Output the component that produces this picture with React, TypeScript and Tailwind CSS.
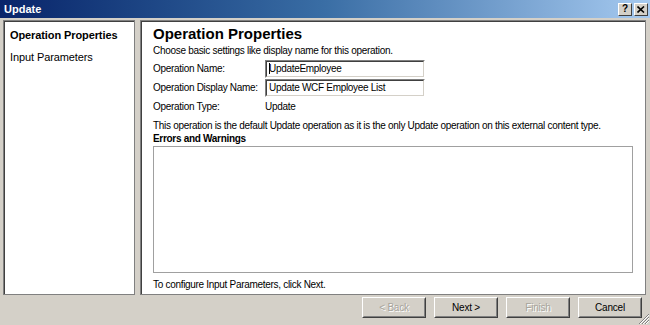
import React from "react";

const font = { fontFamily: '"Liberation Sans", Tahoma, sans-serif' };

function Btn({ label, disabled }: { label: string; disabled?: boolean }) {
  return (
    <div className="w-[64px] h-[21px] border border-t-white border-l-white border-b-[#404040] border-r-[#404040] bg-[#d4d0c8]">
      <div className="w-full h-full border border-t-[#d4d0c8] border-l-[#d4d0c8] border-b-[#808080] border-r-[#808080] flex items-center justify-center">
        <span
          className={disabled ? "text-[10px] tracking-[-0.2px] text-[#a7a49c] [text-shadow:1px_1px_0_#ffffff]" : "text-[10px] tracking-[-0.2px] text-black"}
        >
          {label}
        </span>
      </div>
    </div>
  );
}

function Field({ value, caret }: { value: string; caret?: boolean }) {
  return (
    <div className="w-[160px] h-[18px] border border-t-[#808080] border-l-[#808080] border-b-white border-r-white">
      <div className="w-full h-full bg-white border border-t-[#404040] border-l-[#404040] border-b-[#d4d0c8] border-r-[#d4d0c8] flex items-center pl-[2px] text-[10px] tracking-[-0.3px] text-black leading-none">
        {caret && <span className="inline-block w-px h-[11px] bg-black mr-[-1px]" />}
        {value}
      </div>
    </div>
  );
}

export default function App() {
  return (
    <div className="w-[650px] h-[325px] bg-[#d4d0c8] flex flex-col overflow-hidden relative" style={font}>
      <div className="h-[18px] bg-gradient-to-r from-[#0a246a] via-[#3a6ea5] to-[#a6caf0] flex items-center justify-between pl-[4px] pr-[2px] shrink-0">
        <span className="text-white font-bold text-[11px]">Update</span>
        <div className="flex gap-[2px]">
          <div className="w-[14px] h-[13px] bg-[#d4d0c8] border border-t-white border-l-white border-b-[#404040] border-r-[#404040] flex items-center justify-center text-[10px] font-bold leading-none text-black">?</div>
          <div className="w-[14px] h-[13px] bg-[#d4d0c8] border border-t-white border-l-white border-b-[#404040] border-r-[#404040] flex items-center justify-center">
            <svg width="8" height="7" viewBox="0 0 8 7">
              <path d="M0.5 0.5 L7 6.5 M7 0.5 L0.5 6.5" stroke="#000" strokeWidth="1.6" />
            </svg>
          </div>
        </div>
      </div>
      <div className="flex gap-[5px] pl-[3px] pr-[4px] pt-[2px] h-[277px] shrink-0">
        <div className="w-[132px] bg-white border border-[#808080] shadow-[inset_1px_1px_0_#404040] pl-[6px] pt-[6px] text-[11px] tracking-[-0.1px]">
          <div className="font-bold text-black h-[22px]">Operation Properties</div>
          <div className="text-black">Input Parameters</div>
        </div>
        <div className="flex-1 bg-white border border-[#808080] shadow-[inset_1px_1px_0_#404040] pl-[12px] pr-[12px] pt-[4px] pb-[2px] flex flex-col text-[10px] tracking-[-0.3px] text-black">
          <div className="text-[15px] font-bold leading-[18px] tracking-normal">Operation Properties</div>
          <div className="leading-[13px] mt-[1px]">Choose basic settings like display name for this operation.</div>
          <div className="flex items-center mt-[2px] h-[19px]">
            <span className="w-[112px]">Operation Name:</span>
            <Field value="UpdateEmployee" caret />
          </div>
          <div className="flex items-center h-[19px]">
            <span className="w-[112px]">Operation Display Name:</span>
            <Field value="Update WCF Employee List" />
          </div>
          <div className="flex items-center h-[19px]">
            <span className="w-[112px]">Operation Type:</span>
            <span>Update</span>
          </div>
          <div className="leading-[13px] mt-[3px] whitespace-nowrap">
            This operation is the default Update operation as it is the only Update operation on this external content type.
          </div>
          <div className="font-bold leading-[14px] mt-[0px]">Errors and Warnings</div>
          <div className="flex-1 border border-[#a0a0a0] bg-white mt-[0px]" />
          <div className="leading-[13px] mt-[5px] mb-[1px]">To configure Input Parameters, click Next.</div>
        </div>
      </div>
      <div className="flex justify-end gap-[8px] pr-[8px] pt-[2px]">
        <Btn label="< Back" disabled />
        <Btn label="Next >" />
        <Btn label="Finish" disabled />
        <Btn label="Cancel" />
      </div>
      <svg className="absolute right-0 bottom-0" width="12" height="12" viewBox="0 0 12 12">
        <path d="M11 1 L1 11 M11 4 L4 11 M11 7 L7 11" stroke="#808080" strokeWidth="1" />
        <path d="M11 2 L2 11 M11 5 L5 11 M11 8 L8 11" stroke="#ffffff" strokeWidth="1" />
      </svg>
    </div>
  );
}
